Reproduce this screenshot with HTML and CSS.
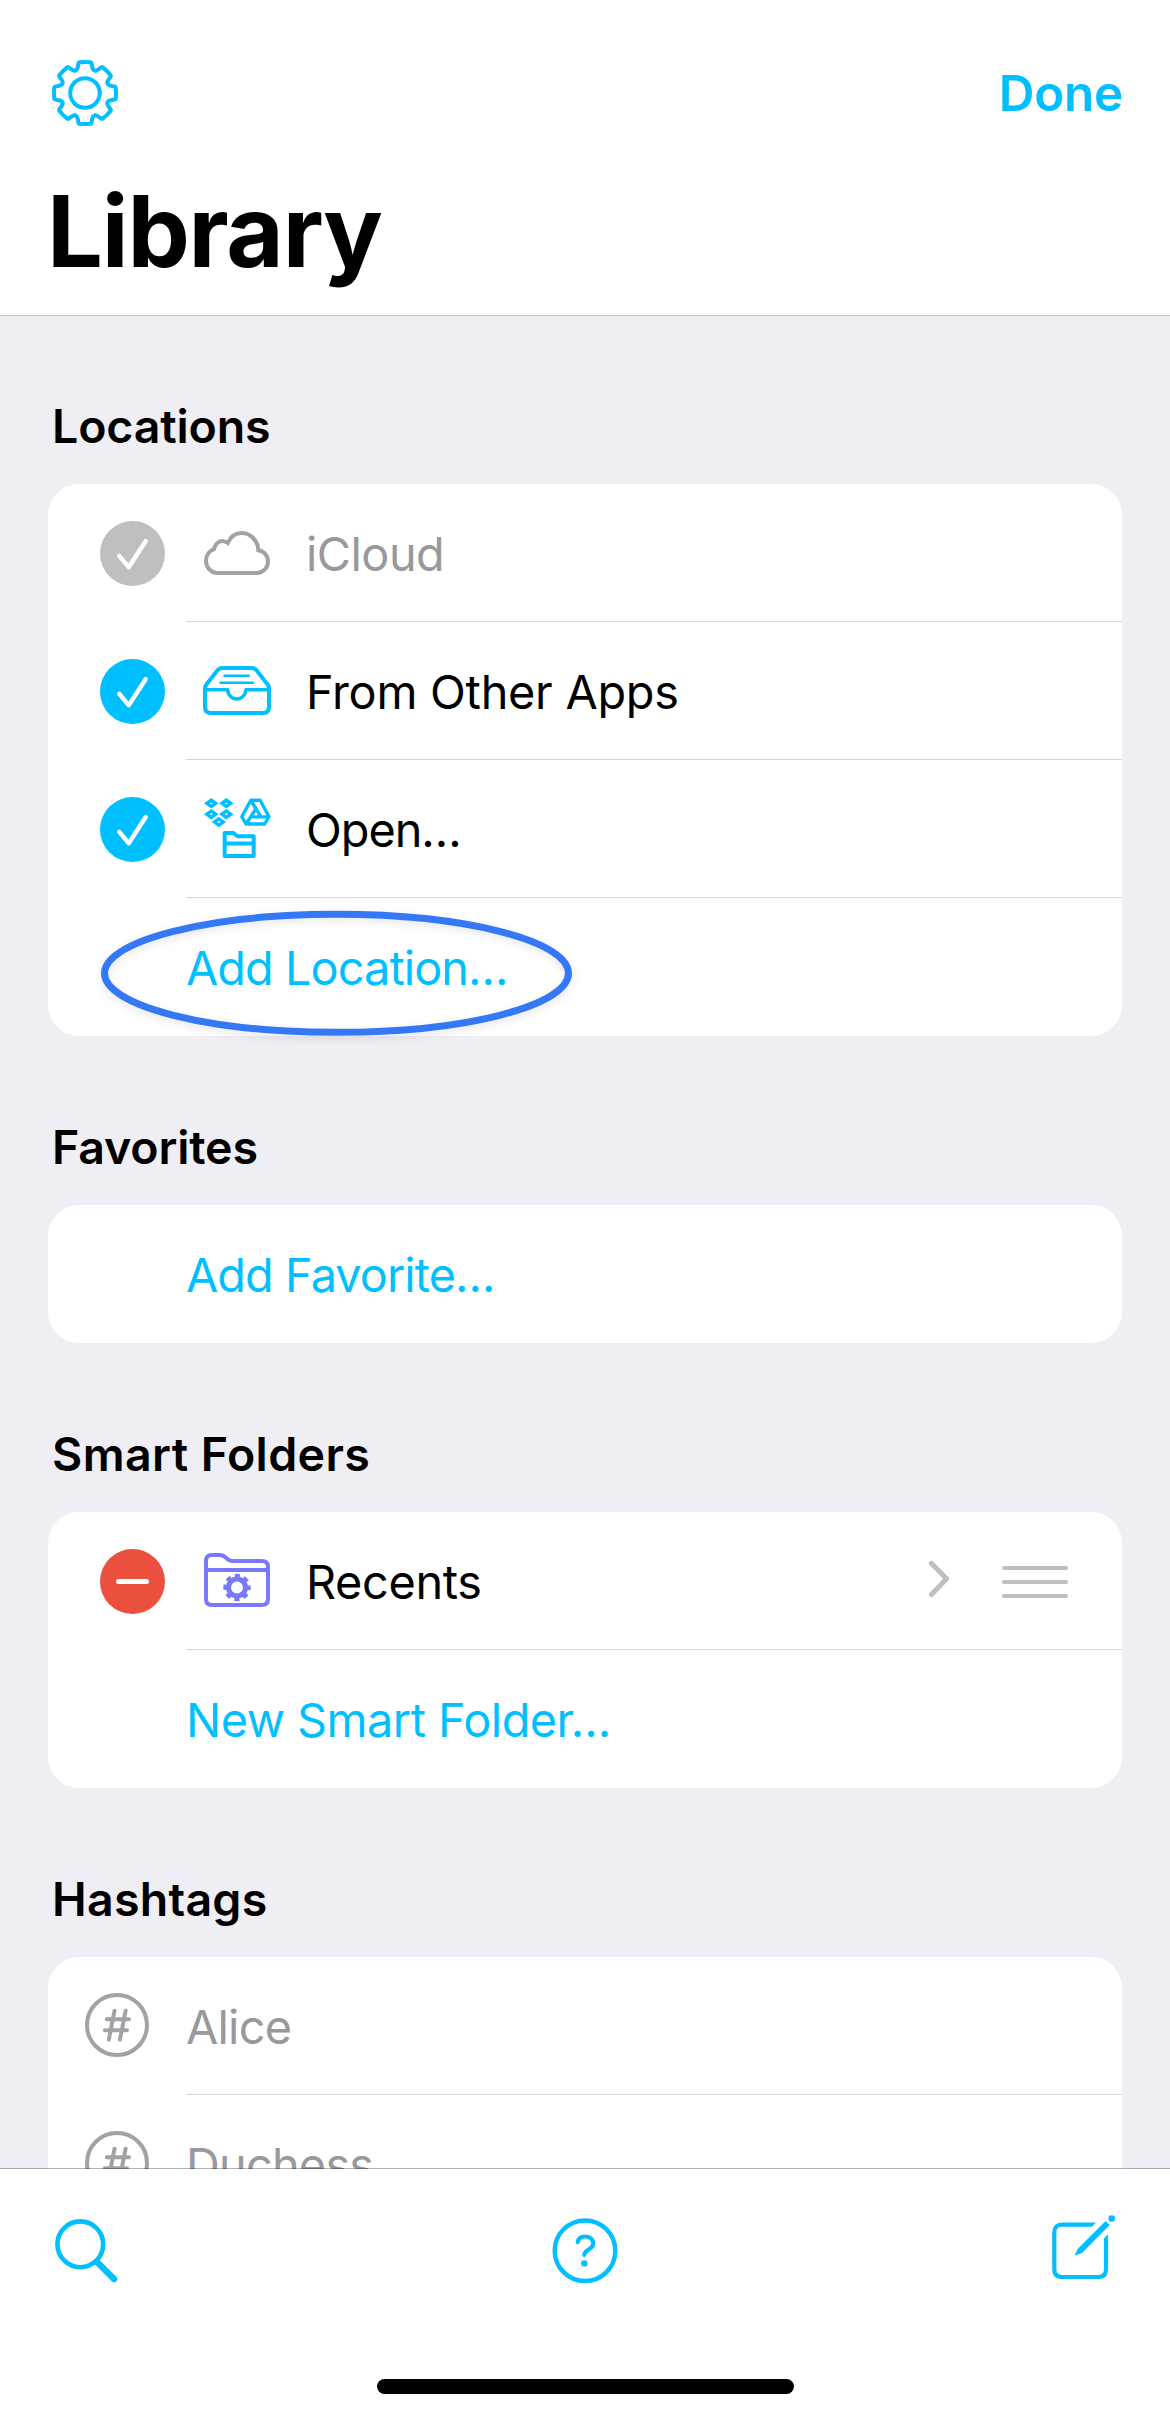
FILE: index.html
```html
<!DOCTYPE html>
<html lang="en">
<head>
<meta charset="utf-8">
<title>Library</title>
<link rel="stylesheet" href="styles.css">
</head>
<body>
<svg class="defs" width="0" height="0">
  <symbol id="check" viewBox="0 0 65 65"><circle cx="32.5" cy="32.5" r="32.5" fill="currentColor"/><path d="M19.3 34.8 28.7 46.2 45.8 20" fill="none" stroke="#fff" stroke-width="4.4" stroke-linecap="round" stroke-linejoin="round"/></symbol>
  <symbol id="hash" viewBox="0 0 64 64"><g fill="none" stroke="currentColor" stroke-width="4" stroke-linecap="round"><circle cx="32" cy="32" r="30"/><path d="M29.5 17.8 23.8 46.6M40.6 17.8 34.9 46.6M21.8 26.3H44M19.8 37.3H42"/></g></symbol>
  <path id="tooth" d="M-9.4 -22.6Q-7.9 -23 -7.5 -24.8L-6.4 -30Q-6.2 -30.6 -5.6 -30.7Q0 -31.3 5.6 -30.7Q6.2 -30.6 6.4 -30L7.5 -24.8Q7.9 -23 9.4 -22.6"/>
</svg>
<div class="screen">
  <header class="header">
    <div class="nav">
      <svg class="icon" width="66" height="66" viewBox="-33 -33 66 66"><g fill="none" stroke="currentColor" stroke-width="4" stroke-linecap="round" stroke-linejoin="round"><circle r="14.8"/><use href="#tooth"/><use href="#tooth" transform="rotate(45)"/><use href="#tooth" transform="rotate(90)"/><use href="#tooth" transform="rotate(135)"/><use href="#tooth" transform="rotate(180)"/><use href="#tooth" transform="rotate(225)"/><use href="#tooth" transform="rotate(270)"/><use href="#tooth" transform="rotate(315)"/></g></svg>
      <span class="done">Done</span>
    </div>
    <h1 class="title">Library</h1>
  </header>

  <main class="content">
    <section class="section">
      <h2 class="heading">Locations</h2>
      <div class="card">
        <div class="row muted">
          <svg class="toggle off" width="65" height="65"><use href="#check"/></svg>
          <span class="glyph"><svg width="66" height="44" viewBox="0 0 66 44"><path d="M13.5 42C7 42 2 36.5 2 30C2 24.5 5.2 20 10 18.2C11.5 11 18 7.5 23.7 12C26.5 6 31.5 2 37.5 2C46.5 2 54 9.5 54.4 19.3C60 20 64 24.7 64 30.5C64 37 59 42 52.5 42Z" fill="none" stroke="currentColor" stroke-width="4" stroke-linejoin="miter"/></svg></span>
          <span class="label icloud">iCloud</span>
        </div>
        <div class="row">
          <svg class="toggle" width="65" height="65"><use href="#check"/></svg>
          <span class="glyph tray"><svg width="68" height="49" viewBox="0 0 68 49"><g fill="none" stroke="currentColor" stroke-width="4" stroke-linejoin="round"><path d="M2 41V22Q2 20.4 3 19L14.5 4.3Q16.3 2 19 2H49Q51.7 2 53.5 4.3L65 19Q66 20.4 66 22V41Q66 47 60 47H8Q2 47 2 41Z"/><path d="M2 23.7H24.8A9 9.3 0 0 0 42.8 23.7H66" stroke-width="3.4"/><path d="M21.5 9.7H45.7M17.5 16.7H50" stroke-width="2.5" stroke-linecap="round"/></g></svg></span>
          <span class="label apps">From Other Apps</span>
        </div>
        <div class="row">
          <svg class="toggle" width="65" height="65"><use href="#check"/></svg>
          <span class="glyph open"><svg width="67" height="60" viewBox="0 0 67 60"><g fill="none" stroke="currentColor" stroke-width="3.4"><path d="M2.9 5.3 7.3 2.1 11.7 5.3 7.3 8.5ZM17.9 5.3 22.3 2.1 26.7 5.3 22.3 8.5ZM2.9 16.2 7.3 13 11.7 16.2 7.3 19.4ZM17.9 16.2 22.3 13 26.7 16.2 22.3 19.4ZM10.4 24 14.8 20.8 19.2 24 14.8 27.2Z"/><path d="M46.8 2.3H56.2L65 18.7 60.7 26H42L37.8 18.7ZM47.5 3.5 57 19M46.7 18.9H65M52.2 10.2 42.2 26" stroke-linejoin="round"/><path d="M20.7 35H29.5L33.5 38.2H49.7V58H20.7ZM20.7 45.5H49.7" stroke-width="4" stroke-linejoin="round"/></g></svg></span>
          <span class="label opening">Open…</span>
        </div>
        <div class="row action">
          <span class="label add">Add Location…</span>
          <svg class="ring" width="480" height="136" viewBox="0 0 480 136"><ellipse cx="239.5" cy="65.3" rx="232" ry="59" fill="none" stroke="#3478f6" stroke-width="7"/></svg>
        </div>
      </div>
    </section>

    <section class="section">
      <h2 class="heading">Favorites</h2>
      <div class="card">
        <div class="row action"><span class="label add">Add Favorite…</span></div>
      </div>
    </section>

    <section class="section">
      <h2 class="heading wide">Smart Folders</h2>
      <div class="card">
        <div class="row">
          <svg class="toggle" width="65" height="65" viewBox="0 0 65 65"><circle cx="32.5" cy="32.5" r="32.5" fill="#eb4f3d"/><path d="M18.5 32.5H46.5" stroke="#fff" stroke-width="5" stroke-linecap="round"/></svg>
          <span class="glyph folder"><svg width="66" height="54" viewBox="0 0 66 54"><g fill="none" stroke="currentColor" stroke-width="4"><path d="M2 46V8Q2 2 8 2H15.5C18.5 2 20.2 3 22 4.8C24 6.8 26 8 29 8H58Q64 8 64 14V46Q64 52 58 52H8Q2 52 2 46ZM2 17H64"/><circle cx="33" cy="34.5" r="8.5" stroke-width="5"/><circle cx="33" cy="34.5" r="12" stroke-width="3.4" stroke-dasharray="5.2 4.225" stroke-dashoffset="2.6"/></g></svg></span>
          <span class="label recents">Recents</span>
          <span class="controls">
            <svg width="24" height="38" viewBox="0 0 24 38"><path d="M3.3 3.3 18.6 18.8 3.5 34.4" fill="none" stroke="currentColor" stroke-width="5" stroke-linecap="round" stroke-linejoin="round"/></svg>
            <svg width="66" height="32" viewBox="0 0 66 32"><path d="M2 2H64M2 16H64M2 30H64" stroke="currentColor" stroke-width="4" stroke-linecap="round"/></svg>
          </span>
        </div>
        <div class="row action"><span class="label smart">New Smart Folder…</span></div>
      </div>
    </section>

    <section class="section">
      <h2 class="heading tags">Hashtags</h2>
      <div class="card">
        <div class="row tag muted"><svg width="64" height="64"><use href="#hash"/></svg><span class="label">Alice</span></div>
        <div class="row tag muted"><svg width="64" height="64"><use href="#hash"/></svg><span class="label">Duchess</span></div>
      </div>
    </section>
  </main>

  <footer class="toolbar">
    <div class="tools">
      <svg class="search" width="64" height="66" viewBox="0 0 64 66"><g fill="none" stroke="currentColor"><circle cx="25.3" cy="25.3" r="22.9" stroke-width="4.6"/><path d="M42.5 43.5 59 60" stroke-width="6.5" stroke-linecap="round"/></g></svg>
      <svg width="66" height="66" viewBox="0 0 66 66"><g fill="none" stroke="currentColor" stroke-linecap="round"><circle cx="33" cy="32.7" r="30.3" stroke-width="4.5"/><path d="M25.7 24.2C26.4 20.7 29.2 18.5 32.8 18.5C37.6 18.5 41.3 21.4 41.3 25.4C41.3 31.7 32.3 31.2 32.3 37" stroke-width="4.2"/></g><circle cx="32.3" cy="45.4" r="3.2" fill="currentColor"/></svg>
      <svg class="compose" width="64" height="66" viewBox="0 0 64 66"><path d="M41 6.7H11Q3.3 6.7 3.3 14.4V51.3Q3.3 59 11 59H47.3Q55 59 55 51.3V20.3" fill="none" stroke="currentColor" stroke-width="4.2"/><path d="M40.9 4.6H45L40.9 8.8ZM57.1 16.2V20.4H52.9ZM25 37.2Q23.9 37.2 24.2 36.2L26.8 30.7 54.6 2.9 58.8 7.1 31 34.9Z" fill="currentColor"/><circle cx="60.7" cy=".6" r="3.3" fill="currentColor"/></svg>
    </div>
    <div class="home"></div>
  </footer>
</div>
</body>
</html>
```

FILE: styles.css
```css
* { box-sizing: border-box; }

body {
  margin: 0;
  background: #fff;
  color: #000;
  font-family: Inter, "Liberation Sans", sans-serif;
}

svg { display: block; flex: none; }
.defs { position: absolute; }

.screen {
  display: flex;
  flex-direction: column;
  width: 1170px;
  height: 2418px;
  overflow: hidden;
  background: #efeef4;
}

.header {
  flex: none;
  height: 316px;
  padding: 60px 47px 0 52px;
  background: #fff;
  border-bottom: 1px solid #c3c3c7;
}

.nav {
  display: flex;
  justify-content: space-between;
  align-items: center;
  height: 66px;
  color: #00bfff;
}

.done { font-size: 49.5px; font-weight: 600; letter-spacing: -0.3px; }

.title {
  margin: 45px 0 0 -5px;
  font-size: 99px;
  line-height: 120px;
  font-weight: 700;
  letter-spacing: -1.2px;
}

.content {
  flex: 1;
  min-height: 0;
  margin-bottom: -1px;
  padding: 0 48px;
  overflow: hidden;
}

.heading {
  display: flex;
  align-items: flex-end;
  height: 169px;
  margin: 0;
  padding: 0 0 28px 4px;
  font-size: 46.5px;
  line-height: 60px;
  font-weight: 600;
  letter-spacing: -0.15px;
}
.section:first-child .heading { height: 168px; }
.heading.wide { letter-spacing: 0.4px; }
.heading.tags { letter-spacing: 0.27px; }

.card { background: #fff; border-radius: 31px; }

.row {
  position: relative;
  display: flex;
  align-items: center;
  height: 138px;
  padding-left: 52px;
}
.row:not(:last-child)::after {
  content: "";
  position: absolute;
  left: 138px;
  right: 0;
  bottom: 0;
  height: 1px;
  background: #d6d6d9;
}

.toggle { color: #00bfff; margin-top: 1px; }
.toggle.off { color: #bfbfbf; }

.glyph {
  display: flex;
  justify-content: center;
  width: 68px;
  margin: 0 35px 0 38px;
  color: #00bfff;
}
.muted .glyph { color: #a1a1a6; }
.tray { margin-top: -2px; }
.open { margin-top: -2px; }
.folder { margin-top: -2px; color: #7878ff; }

.label {
  padding-top: 2px;
  font-size: 46.8px;
  line-height: 136px;
  letter-spacing: -0.75px;
  white-space: nowrap;
}
.muted .label { color: #98989d; }
.muted .icloud { letter-spacing: -0.5px; }
.apps { letter-spacing: -0.25px; }
.opening { letter-spacing: -1px; }
.recents { letter-spacing: -0.32px; }
.smart { letter-spacing: -0.52px; }

.row.action { padding-left: 138px; color: #00bfff; }
.add { letter-spacing: -0.92px; }

.ring {
  position: absolute;
  left: 49px;
  top: 10px;
  overflow: visible;
  filter: drop-shadow(0 3px 4px rgba(0, 0, 0, 0.1));
}

.controls {
  display: flex;
  align-items: center;
  gap: 50px;
  margin: 0 54px 0 auto;
  color: #bfbfbf;
}
.controls svg:first-child { margin-top: -4px; }
.controls svg:last-child { margin-top: 1px; }

.row.tag { gap: 37px; padding-left: 37px; color: #a1a1a6; }
.row.tag svg { margin-top: -2px; }

.toolbar {
  position: relative;
  flex: none;
  display: flex;
  flex-direction: column;
  align-items: center;
  justify-content: space-between;
  height: 250px;
  padding: 49px 55px 24px;
  background: #fff;
  background-clip: padding-box;
  border-top: 1px solid rgba(0, 0, 0, 0.3);
}

.tools {
  display: flex;
  justify-content: space-between;
  align-self: stretch;
  color: #00bfff;
}
.search { margin-top: 1px; }
.compose { overflow: visible; }

.home { width: 417px; height: 15px; border-radius: 8px; background: #000; }
```
